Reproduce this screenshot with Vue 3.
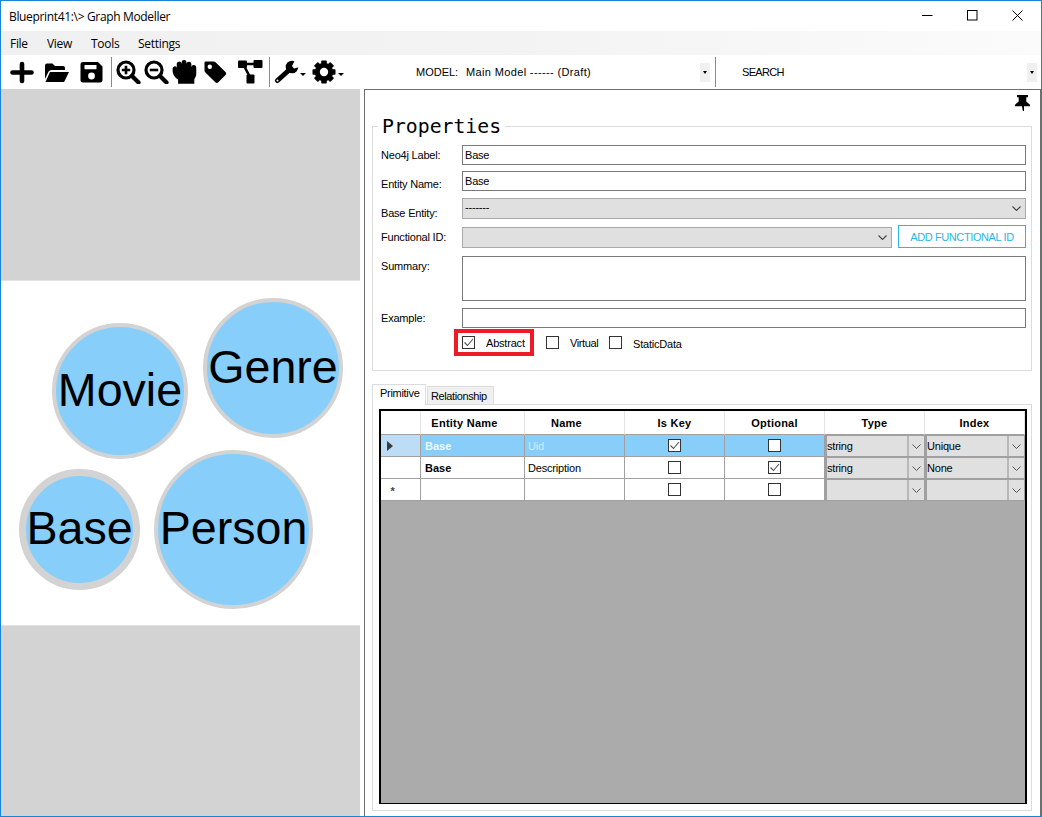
<script setup>
const menus = ['File', 'View', 'Tools', 'Settings']
const nodes = [
  { name: 'Movie', cls: 'movie' },
  { name: 'Genre', cls: 'genre' },
  { name: 'Base', cls: 'base' },
  { name: 'Person', cls: 'person' },
]
const rows = [
  { kind: 'selected', marker: 'arrow', entity: 'Base', name: 'Uid', key: true, optional: false, type: 'string', index: 'Unique' },
  { kind: 'plain', marker: '', entity: 'Base', name: 'Description', key: false, optional: true, type: 'string', index: 'None' },
  { kind: 'plain', marker: 'star', entity: '', name: '', key: false, optional: false, type: '', index: '' },
]
const gearTeeth = [0, 45, 90, 135, 180, 225, 270, 315]
</script>

<template>
  <div class="window">
    <header class="titlebar">
      <span class="title">Blueprint41:\&gt; Graph Modeller</span>
      <div class="winbtns">
        <svg width="11" height="11" viewBox="0 0 11 11"><path d="M0 5.5h10.5" stroke="#000" fill="none" /></svg>
        <svg width="11" height="11" viewBox="0 0 11 11"><rect x=".5" y=".5" width="9.5" height="9.5" stroke="#000" fill="none" /></svg>
        <svg width="11" height="11" viewBox="0 0 11 11"><path d="M.5.5l10 10M10.5.5l-10 10" stroke="#000" fill="none" /></svg>
      </div>
    </header>

    <nav class="menubar">
      <span v-for="m in menus" :key="m" class="menu" :class="'m-' + m">{{ m }}</span>
    </nav>

    <div class="toolbar">
      <svg class="ic i-plus" width="24" height="24" viewBox="0 0 24 24"><path d="M12 4v17M2.5 12.5h19" stroke="#000" stroke-width="4.6" stroke-linecap="round" fill="none" /></svg>
      <svg class="ic i-folder" width="26" height="24" viewBox="0 0 26 24"><path d="M1 19V5.5A2 2 0 0 1 3 3.500h5.500L11 6h8a2 2 0 0 1 2 2v2H7.500a3.500 3.500 0 0 0-3 1.800L1 19z" /><path d="M6.500 12h18.500l-4.500 9.300a1 1 0 0 1-1 .7H1.500L5.500 13a1.500 1.500 0 0 1 1-1z" /></svg>
      <svg class="ic i-save" width="24" height="24" viewBox="0 0 24 24"><path d="M3 2h15l4.500 4.500V20a2.500 2.500 0 0 1-2.500 2.500H3A2.500 2.500 0 0 1 .5 20V4.500A2.500 2.500 0 0 1 3 2z" /><rect x="4.500" y="5" width="12" height="4.300" rx=".6" fill="#fff" /><circle cx="11.500" cy="16" r="3.400" fill="#fff" /></svg>
      <i class="sep s1"></i>
      <svg class="ic i-zoom1" width="25" height="24" viewBox="0 0 25 24"><circle cx="10" cy="10" r="8" fill="none" stroke="#000" stroke-width="3.200" /><path d="M16 16l6.500 6.500" stroke="#000" stroke-width="4.200" stroke-linecap="round" /><path d="M10 5.800v8.400M5.800 10h8.400" stroke="#000" stroke-width="2.600" /></svg>
      <svg class="ic i-zoom2" width="25" height="24" viewBox="0 0 25 24"><circle cx="10" cy="10" r="8" fill="none" stroke="#000" stroke-width="3.200" /><path d="M16 16l6.500 6.500" stroke="#000" stroke-width="4.200" stroke-linecap="round" /><path d="M5.800 10h8.400" stroke="#000" stroke-width="2.600" /></svg>
      <svg class="ic i-hand" width="25" height="24" viewBox="1.500 1.500 20.500 19.800" preserveAspectRatio="none"><path d="M2 8.500a1.800 1.800 0 0 1 3.400-.8V5a2 2 0 0 1 4-.3V3.500a2 2 0 0 1 4 0v1.300a2 2 0 0 1 4 .2v2.500a2 2 0 0 1 4 .300v5.200c0 1.700-.8 3-1.600 4.300V21H6.500v-3.300C3.500 15.500 2 13 2 10.500z" /></svg>
      <svg class="ic i-tag" width="25" height="24" viewBox="0 0 25 24"><path d="M2.500 1.500h8.300c.8 0 1.400.300 2 .9l9.700 9.700c.9.900.9 2.100 0 3l-7.200 7.200c-.9.900-2.100.9-3 0L2.400 12.400c-.6-.6-.9-1.200-.9-2V2.500a1 1 0 0 1 1-1z" /><circle cx="6.800" cy="6.800" r="2.200" fill="#fff" /></svg>
      <svg class="ic i-net" width="25" height="24" viewBox="0 0 25 24"><path d="M5 4h14M5 4l7 13" stroke="#000" stroke-width="2.600" fill="none" /><rect x="0" y="0.500" width="9" height="7.500" rx="1" /><rect x="15.500" y="0" width="9" height="8" rx="1" /><rect x="8.500" y="14.500" width="8" height="9" rx="1" /></svg>
      <i class="sep s2"></i>
      <svg class="ic i-wrench" width="25" height="24" viewBox="0 0 25 24"><circle cx="18" cy="7" r="6.300" /><path d="M14 11L3.500 20.500" stroke="#000" stroke-width="5" stroke-linecap="round" /><path d="M18 6l3-6h5v7l-6 1.500z" fill="#fff" /><circle cx="3.500" cy="20.500" r="1" fill="#fff" /></svg>
      <i class="caret c1"></i>
      <svg class="ic i-gear" width="24" height="24" viewBox="0 0 24 24"><rect v-for="a in gearTeeth" :key="a" x="9.200" y="0.500" width="5.600" height="6" rx=".8" :transform="`rotate(${a} 12 12)`" /><circle cx="12" cy="12" r="6.700" fill="none" stroke="#000" stroke-width="5" /></svg>
      <i class="caret c2"></i>

      <div class="drop model">
        <span class="lbl-model">MODEL:</span>
        <span class="val-model">Main Model ------ (Draft)</span>
        <span class="drop-btn"><i class="caret"></i></span>
      </div>
      <i class="sep s3"></i>
      <div class="drop search">
        <span class="val-search">SEARCH</span>
        <span class="drop-btn"><i class="caret"></i></span>
      </div>
    </div>

    <main class="main">
      <section class="canvas">
        <div class="gray top"></div>
        <div class="stage">
          <div v-for="n in nodes" :key="n.name" class="node" :class="n.cls">{{ n.name }}</div>
        </div>
        <div class="gray bottom"></div>
      </section>

      <section class="panel">
        <div class="pinrow">
          <svg width="17" height="16" viewBox="0 0 17 16"><path d="M3 0h11v2.200h-1.700v4.200l3.700 3.300v1.600h-6V16h-1.200l-.8-4.700H1V9.700l3.700-3.300V2.200H3z" /></svg>
        </div>

        <div class="group">
          <span class="legend">Properties</span>
          <div class="row r-h20"><label>Neo4j Label:</label><div class="field">Base</div></div>
          <div class="row r-h20 g6"><label class="l-entity">Entity Name:</label><div class="field">Base</div></div>
          <div class="row r-h21 g7">
            <label class="l-base">Base Entity:</label>
            <div class="combo">-------<svg class="chev" width="9" height="5" viewBox="0 0 9 5"><path d="M.5.500l4 4 4-4" fill="none" stroke="#444" stroke-width="1.100" /></svg></div>
          </div>
          <div class="row r-h21 g8">
            <label class="l-fn">Functional ID:</label>
            <div class="combo short"><svg class="chev" width="9" height="5" viewBox="0 0 9 5"><path d="M.5.500l4 4 4-4" fill="none" stroke="#444" stroke-width="1.100" /></svg></div>
            <button class="addbtn">ADD FUNCTIONAL ID</button>
          </div>
          <div class="row r-h45 g8"><label class="l-top">Summary:</label><div class="field"></div></div>
          <div class="row r-h20 g7"><label class="l-ex">Example:</label><div class="field"></div></div>
          <div class="checks">
            <div class="abstract">
              <span class="cb"><svg width="11" height="11" viewBox="0 0 11 11"><path d="M1.500 5.500l3 3 5.500-6.500" fill="none" stroke="#555" stroke-width="1.100" /></svg></span>
              <span class="ck-label abs">Abstract</span>
            </div>
            <span class="cb"></span><span class="ck-label virt">Virtual</span>
            <span class="cb"></span><span class="ck-label stat">StaticData</span>
          </div>
        </div>

        <div class="tabs">
          <div class="tab active">Primitive</div>
          <div class="tab">Relationship</div>
        </div>
        <div class="tabpage">
          <div class="datagrid">
            <div class="gridrow head">
              <div class="cell hcell"></div>
              <div class="cell hcell pr">Entity Name</div>
              <div class="cell hcell pr">Name</div>
              <div class="cell hcell">Is Key</div>
              <div class="cell hcell">Optional</div>
              <div class="cell hcell">Type</div>
              <div class="cell hcell">Index</div>
            </div>
            <div v-for="(r, i) in rows" :key="i" class="gridrow" :class="r.kind">
              <div class="cell rowhead">
                <svg v-if="r.marker === 'arrow'" width="6" height="10" viewBox="0 0 6 10"><path d="M0 0l6 5-6 5z" fill="#3a3a3a" /></svg>
                <span v-else-if="r.marker === 'star'" class="star">*</span>
              </div>
              <div class="cell txt bold">{{ r.entity }}</div>
              <div class="cell txt dim">{{ r.name }}</div>
              <div class="cell ctr"><span class="cb"><svg v-if="r.key" width="11" height="11" viewBox="0 0 11 11"><path d="M1.500 5.500l3 3 5.500-6.500" fill="none" stroke="#555" stroke-width="1.100" /></svg></span></div>
              <div class="cell ctr"><span class="cb"><svg v-if="r.optional" width="11" height="11" viewBox="0 0 11 11"><path d="M1.500 5.500l3 3 5.500-6.500" fill="none" stroke="#555" stroke-width="1.100" /></svg></span></div>
              <div class="cell gc"><span class="gc-v">{{ r.type }}</span><span class="gc-b"><svg width="9" height="5" viewBox="0 0 9 5"><path d="M.5.500l4 4 4-4" fill="none" stroke="#555" /></svg></span></div>
              <div class="cell gc"><span class="gc-v">{{ r.index }}</span><span class="gc-b"><svg width="9" height="5" viewBox="0 0 9 5"><path d="M.5.500l4 4 4-4" fill="none" stroke="#555" /></svg></span></div>
            </div>
          </div>
        </div>
      </section>
    </main>
  </div>
</template>

<style>
html, body { margin: 0; background: #fff; }
</style>

<style scoped>
.window {
  width: 1042px; height: 817px; box-sizing: border-box;
  border: 1px solid #1883d7; background: #fff;
  display: flex; flex-direction: column;
  font-family: "Liberation Sans", Arial, sans-serif; font-size: 11px; color: #000;
  letter-spacing: -.2px;
  overflow: hidden;
}
.titlebar { height: 30px; flex: none; display: flex; align-items: center; justify-content: space-between; }
.title { font-family: "Open Sans", sans-serif; font-size: 12px; padding-left: 8px; letter-spacing: -.34px; }
.winbtns { display: flex; width: 111px; gap: 34px; margin: -1px 8px 0 0; }
.winbtns svg { display: block; }
.menubar {
  height: 24px; flex: none; display: flex; align-items: center; padding-left: 9px;
  background: linear-gradient(90deg, #f0f0f0 0%, #f3f3f3 50%, #fbfbfb 100%);
  font-family: "Open Sans", sans-serif; font-size: 12px;
}
.menu { letter-spacing: -.3px; }
.m-File { width: 37px; }
.m-View { width: 44px; }
.m-Tools { width: 47px; }
.toolbar {
  height: 34px; flex: none; display: flex; align-items: center; background: #fff;
}
.ic { flex: none; display: block; fill: #000; }
.i-plus { margin-left: 9px; }
.i-folder { margin-left: 10px; }
.i-save { margin-left: 10px; }
.sep { display: block; flex: none; width: 1px; height: 30px; background: #8c8c8c; }
.s1 { margin-left: 7px; }
.i-zoom1 { margin-left: 4px; }
.i-zoom2 { margin-left: 3px; }
.i-hand { margin-left: 3px; }
.i-tag { margin-left: 6px; }
.i-net { margin-left: 10px; }
.s2 { margin-left: 6px; }
.i-wrench { margin-left: 4px; }
.caret { display: block; flex: none; width: 0; height: 0; border: 3px solid transparent; border-top: 3px solid #000; border-bottom: 0; }
.c1 { margin: 4px 0 0 1px; }
.i-gear { margin-left: 6px; }
.c2 { margin: 4px 0 0 2px; }
.drop { display: flex; align-items: center; height: 19px; flex: none; }
.model { margin-left: 72px; width: 294px; }
.lbl-model { width: 50px; letter-spacing: 0; }
.val-model { flex: 1; letter-spacing: .36px; }
.drop-btn { width: 10px; height: 19px; background: #f0f0f0; display: flex; align-items: center; justify-content: center; }
.drop-btn .caret { border-width: 2.500px; border-top-width: 3px; border-bottom: 0; }
.s3 { margin-left: 5px; }
.search { margin-left: 26px; width: 295px; }
.val-search { flex: 1; letter-spacing: -.7px; }
.main { flex: 1; min-height: 0; display: flex; }
.canvas { width: 359px; flex: none; display: flex; flex-direction: column; }
.gray { background: #d3d3d3; flex: none; }
.gray.top { height: 191px; border-bottom: 1px solid #e2e2e2; }
.gray.bottom { height: 190px; border-top: 1px solid #e2e2e2; }
.stage { flex: 1; position: relative; }
.node {
  position: absolute; box-sizing: border-box; border-radius: 50%;
  background: #87cefa; border: 4px solid #d3d3d3; padding-bottom: 2px;
  display: flex; align-items: center; justify-content: center;
  font-size: 46.600px; line-height: 1; white-space: nowrap; letter-spacing: 0;
}
.movie { left: 51px; top: 42px; width: 136px; height: 136px; }
.genre { left: 202px; top: 17px; width: 140px; height: 140px; }
.base { left: 18px; top: 188px; width: 121px; height: 121px; border-width: 7px; }
.person { left: 153px; top: 169px; width: 159px; height: 159px; }
.panel {
  margin-left: 4px; width: 677px; box-sizing: border-box;
  border: 1px solid #6e6e6e; border-bottom: 0;
  padding: 0 8px 5px 7px; display: flex; flex-direction: column;
}
.pinrow { height: 36px; flex: none; display: flex; justify-content: flex-end; padding-top: 5px; box-sizing: border-box; margin-right: 1px; }
.pinrow svg { display: block; fill: #000; }
.group {
  position: relative; height: 245px; flex: none; box-sizing: border-box; width: 660px;
  border: 1px solid #dcdcdc; padding: 18px 5px 0 8px;
}
.legend {
  position: absolute; left: 5px; top: -10px; padding: 0 4px; background: #fff;
  font-family: "DejaVu Sans Mono", monospace; font-size: 19.800px; line-height: 20px; letter-spacing: 0;
}
.row { display: flex; align-items: stretch; }
.row label { width: 81px; flex: none; display: flex; align-items: center; font-size: 11px; }
.r-h20 { height: 20px; }
.r-h21 { height: 21px; }
.r-h45 { height: 45px; }
.g6 { margin-top: 6px; }
.g7 { margin-top: 7px; }
.g8 { margin-top: 8px; }
.row .l-entity { padding-top: 6px; height: 14px; }
.row .l-base { padding-top: 8px; height: 13px; }
.row .l-fn { padding-bottom: 1px; height: 20px; }
.row .l-top { align-items: flex-start; padding-top: 4px; height: 13px; }
.field {
  flex: 1; box-sizing: border-box; border: 1px solid #7a7a7a; background: #fff;
  padding-left: 2px; line-height: 18px;
}
.combo {
  flex: 1; box-sizing: border-box; position: relative;
  background: #e0e0e0; border: 1px solid #a9a9a9; padding-left: 2px; line-height: 17px;
}
.chev { position: absolute; right: 4px; top: 7px; display: block; }
.combo.short { flex: none; width: 430px; }
.addbtn {
  flex: none; width: 128px; height: 23px; margin: -2px 0 0 6px; box-sizing: border-box;
  background: #fff; border: 1px solid #29b6ec; color: #29b6ec;
  font-family: "Liberation Sans", Arial, sans-serif; font-size: 11px; padding: 0; letter-spacing: -.4px;
}
.checks { display: flex; align-items: center; height: 27px; margin: 1px 0 0 73px; }
.abstract {
  box-sizing: border-box; width: 80px; height: 27px; border: 4px solid #ed1c24;
  display: flex; align-items: center; padding-left: 4px; margin-right: 12px;
}
.cb {
  display: inline-flex; align-items: center; justify-content: center; flex: none;
  box-sizing: border-box; width: 13px; height: 13px; border: 1px solid #333; background: #fff;
}
.cb svg { display: block; }
.ck-label { margin-left: 11px; white-space: nowrap; }
.abs { margin-top: 1px; }
.virt { width: 39px; letter-spacing: -.4px; }
.stat { margin-top: 2px; }
.tabs { display: flex; align-items: flex-end; height: 21px; margin-top: 12px; flex: none; position: relative; z-index: 1; }
.tab {
  box-sizing: border-box; height: 18px; padding: 0 6px 0 3px; background: #f0f0f0;
  border: 1px solid #dcdcdc; border-bottom: 0; line-height: 18px;
  margin-left: 1px; letter-spacing: -.4px;
}
.tab.active {
  background: #fff; margin: 0 0 -1px; width: 54px; padding: 0 0 0 7px; line-height: 17px; height: 21px; letter-spacing: -.3px;
}
.tabpage {
  flex: 1; min-height: 0; box-sizing: border-box; width: 660px;
  border: 1px solid #dcdcdc; padding: 4px 4px 6px 6px;
  display: flex;
}
.datagrid {
  flex: 1; box-sizing: border-box; border: 2px solid #000; border-bottom-width: 1px; background: #ababab;
  overflow: hidden;
}
.gridrow { display: grid; grid-template-columns: 40px 104px 100px 100px 100px 100px 100px; height: 22px; }
.gridrow.head { height: 24px; background: #fff; }
.cell { box-sizing: border-box; border-right: 1px solid #a0a0a0; border-bottom: 1px solid #a0a0a0; background: #fff; display: flex; align-items: center; min-width: 0; }
.hcell { justify-content: center; font-weight: bold; border-right-color: #e3e3e3; letter-spacing: .25px; }
.hcell.pr { padding-right: 16px; }
.rowhead { justify-content: center; border-right-color: #a0a0a0; }
.rowhead svg { display: block; margin-left: -22px; }
.star { margin-left: -16px; font-weight: bold; font-size: 11px; color: #444; line-height: 11px; padding-top: 3px; }
.txt { padding-left: 3px; }
.bold { font-weight: bold; padding-left: 4px; letter-spacing: 0; }
.ctr { justify-content: center; }
.selected .cell { background: #87cefa; }
.selected .rowhead { background: #bddcf5; }
.selected .txt { color: #eef8fe; }
.selected .dim { color: #d0eafc; font-weight: normal; }
.gc { background: #e0e0e0; border: 1px solid #a0a0a0; border-left-width: 2px; padding-left: 0; justify-content: space-between; }
.selected .gc { background: #e0e0e0; }
.gc-v { flex: 1; }
.gc-b { width: 17px; align-self: stretch; flex: none; display: flex; align-items: center; justify-content: center; border-left: 2px solid #b8b8b8; box-sizing: border-box; }
.gc-b svg { display: block; }
</style>
